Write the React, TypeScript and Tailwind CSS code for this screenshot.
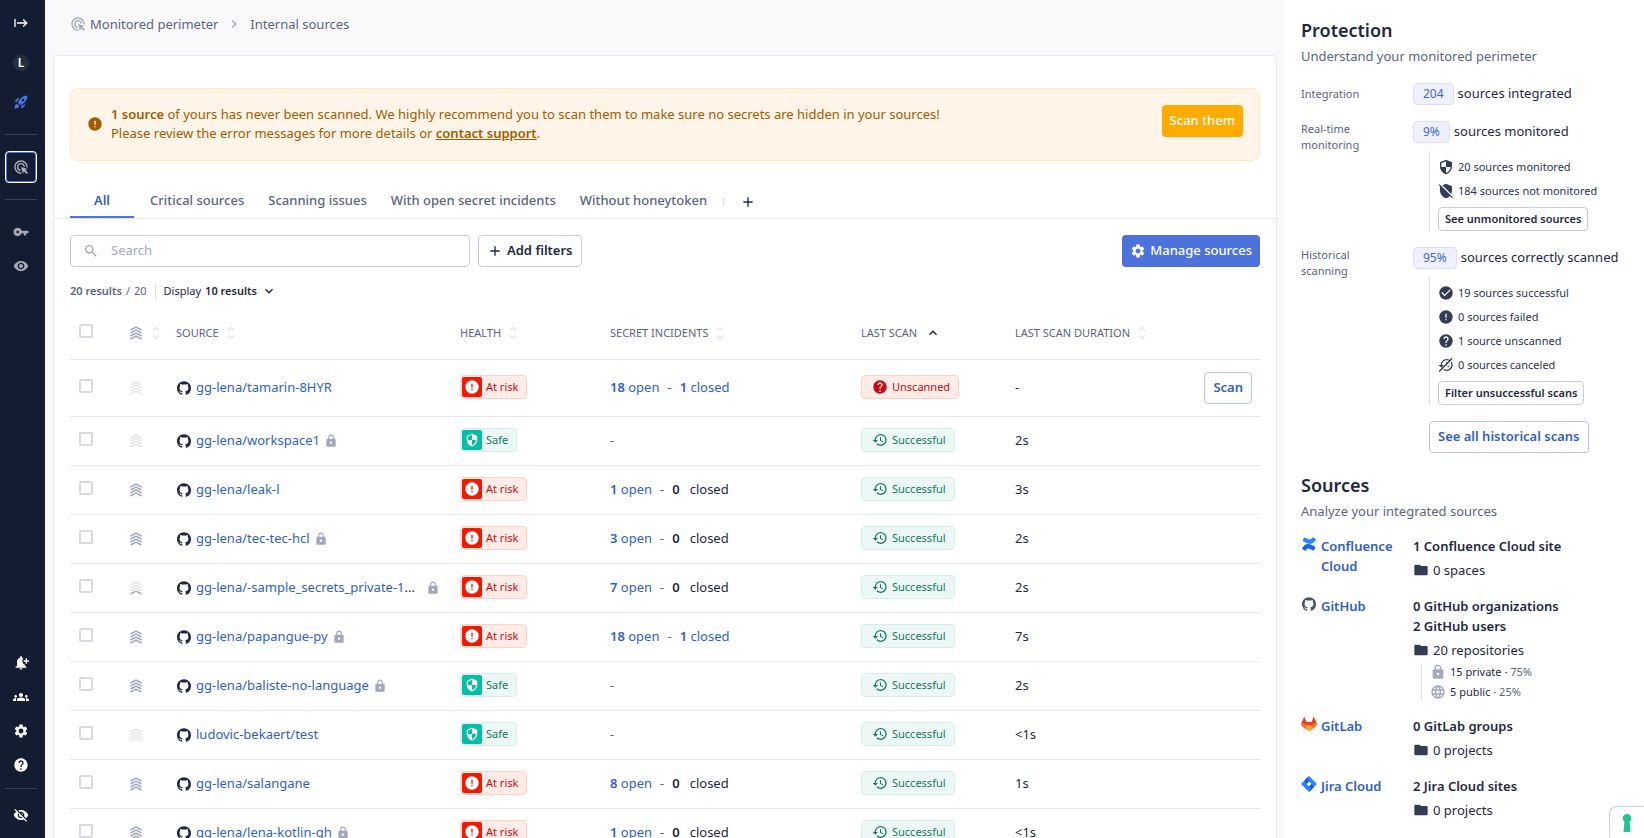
import type { ReactNode } from "react";
import type { IconType } from "react-icons";
import {
  MdAdd,
  MdAdsClick,
  MdCheckCircle,
  MdChevronRight,
  MdError,
  MdExpandLess,
  MdExpandMore,
  MdFolder,
  MdGroups,
  MdHelp,
  MdHistory,
  MdLanguage,
  MdLock,
  MdNotificationAdd,
  MdRemoveModerator,
  MdRocketLaunch,
  MdSearch,
  MdSecurity,
  MdSettings,
  MdStart,
  MdVisibility,
  MdVisibilityOff,
} from "react-icons/md";
import { SiGithub } from "react-icons/si";

type Level = "none" | "low" | "all";

interface Source {
  name: string;
  shortened?: boolean;
  locked?: boolean;
  level: Level;
  open?: number;
  closed?: number;
  scanned: boolean;
  duration: string;
}

const sources: Source[] = [
  { name: "gg-lena/tamarin-8HYR", level: "none", open: 18, closed: 1, scanned: false, duration: "-" },
  { name: "gg-lena/workspace1", locked: true, level: "none", scanned: true, duration: "2s" },
  { name: "gg-lena/leak-l", level: "all", open: 1, closed: 0, scanned: true, duration: "3s" },
  { name: "gg-lena/tec-tec-hcl", locked: true, level: "all", open: 3, closed: 0, scanned: true, duration: "2s" },
  { name: "gg-lena/-sample_secrets_private-1", shortened: true, locked: true, level: "low", open: 7, closed: 0, scanned: true, duration: "2s" },
  { name: "gg-lena/papangue-py", locked: true, level: "all", open: 18, closed: 1, scanned: true, duration: "7s" },
  { name: "gg-lena/baliste-no-language", locked: true, level: "all", scanned: true, duration: "2s" },
  { name: "ludovic-bekaert/test", level: "none", scanned: true, duration: "<1s" },
  { name: "gg-lena/salangane", level: "all", open: 8, closed: 0, scanned: true, duration: "1s" },
  { name: "gg-lena/lena-kotlin-gh", locked: true, level: "all", open: 1, closed: 0, scanned: true, duration: "<1s" },
];

function Criticality({ level }: { level: Level }) {
  const rest = level === "all" ? "#a3a8ba" : "#e3e4ea";
  const last = level === "none" ? "#e3e4ea" : "#a3a8ba";
  return (
    <svg viewBox="0 0 12 14" className="h-3.5 w-3" fill="none" strokeWidth="1.5" aria-hidden="true">
      <path d="M.5 4 6 1l5.5 3M.5 7 6 4l5.500 3M.5 10 6 7l5.500 3" stroke={rest} />
      <path d="M.5 13 6 10l5.500 3" stroke={last} />
    </svg>
  );
}

function SortIcon() {
  return (
    <svg viewBox="0 0 8 14" className="h-3.5 w-2" fill="none" stroke="#e3e4ea" strokeWidth="1.4" aria-hidden="true">
      <path d="M1 4.500 4 1.500l3 3M1 9.500l3 3 3-3" />
    </svg>
  );
}

function KeyIcon({ className }: { className?: string }) {
  return (
    <svg viewBox="0 0 24 24" className={className} fill="currentColor" aria-hidden="true">
      <path
        fillRule="evenodd"
        d="M7 5.800a6.200 6.200 0 1 0 5.900 8.200H16v2.200a1.200 1.200 0 0 0 1.200 1.200h1.600a1.200 1.200 0 0 0 1.200-1.200V14h2a1.500 1.500 0 0 0 1.500-1.500v-1A1.500 1.500 0 0 0 22 10h-9.100A6.200 6.200 0 0 0 7 5.800zM7 10a2 2 0 1 1 0 4 2 2 0 0 1 0-4z"
      />
    </svg>
  );
}

function Checkbox({ label }: { label: string }) {
  return (
    <input
      type="checkbox"
      aria-label={label}
      className="mb-1 block size-3.5 appearance-none rounded-xs border-2 border-[#d8d9e1] bg-white checked:bg-[#4d72db]"
    />
  );
}

function RailButton({
  icon: Icon,
  label,
  className,
}: {
  icon: IconType | typeof KeyIcon;
  label: string;
  className: string;
}) {
  return (
    <button type="button" aria-label={label} className={`flex w-8 items-center justify-center ${className}`}>
      <Icon className="size-4" />
    </button>
  );
}

function Rail() {
  return (
    <nav aria-label="Main" className="flex w-[45px] shrink-0 flex-col bg-[#141c31] pr-1 pl-[5px]">
      <RailButton icon={MdStart} label="Expand menu" className="mt-[7px] h-8 text-white" />
      <button type="button" aria-label="Workspace" className="mt-2 flex h-8 w-8 items-center justify-center">
        <span className="flex size-4 items-center justify-center rounded-full bg-[#262e42] text-xs font-semibold text-white">L</span>
      </button>
      <RailButton icon={MdRocketLaunch} label="Get started" className="mt-[7px] h-8 text-[#4d72db]" />
      <hr className="mt-4 w-8 border-[#3a4257]" />
      <RailButton
        icon={MdAdsClick}
        label="Monitored perimeter"
        className="mt-4 h-8 rounded-sm border border-white text-[#b0b3be] inset-ring inset-ring-[#4d72db]"
      />
      <hr className="mt-4 w-8 border-[#3a4257]" />
      <RailButton icon={KeyIcon} label="Secrets" className="mt-4 h-8 text-[#a5a8b4]" />
      <RailButton icon={MdVisibility} label="Public monitoring" className="mt-[2px] h-8 text-[#a5a8b4]" />
      <div className="mt-auto flex flex-col pb-[7px]">
        <RailButton icon={MdNotificationAdd} label="Notifications" className="h-[34px] text-white" />
        <RailButton icon={MdGroups} label="Members" className="h-[34px] text-white" />
        <RailButton icon={MdSettings} label="Settings" className="h-[34px] text-white" />
        <RailButton icon={MdHelp} label="Help" className="h-[34px] text-white" />
        <hr className="mt-1.5 mb-2.5 w-8 border-[#3a4257]" />
        <RailButton icon={MdVisibilityOff} label="Hide sensitive data" className="h-8 text-white" />
      </div>
    </nav>
  );
}

const tabs = ["All", "Critical sources", "Scanning issues", "With open secret incidents", "Without honeytoken"];

function Tabs() {
  return (
    <div className="mt-[25px] flex items-center border-b border-[#e6e7eb] px-4">
      <div role="tablist" className="flex">
        {tabs.map((tab, i) => (
          <button
            key={tab}
            type="button"
            role="tab"
            aria-selected={i === 0}
            className={
              i === 0
                ? "mr-1 h-8 w-16 border-b-2 border-[#4d72db] font-semibold text-[#2f5fc4]"
                : "h-8 border-b-2 border-transparent px-3 font-medium text-[#5c6480]"
            }
          >
            {tab}
          </button>
        ))}
      </div>
      <span className="ml-1 h-2 w-px bg-[#d8d9e1]" />
      <button type="button" aria-label="Add tab" className="ml-4 flex size-4 items-center justify-center text-[#1f2840]">
        <MdAdd className="size-4" />
      </button>
    </div>
  );
}

function Health({ safe }: { safe: boolean }) {
  return safe ? (
    <span className="inline-flex h-6 items-center rounded-sm border border-[#d3f1ea] bg-[#ecf8f6] pr-2 pl-px text-[11px] text-[#14785f]">
      <span className="mr-1 flex size-5 items-center justify-center rounded-xs bg-[#00bfa5] text-white">
        <MdSecurity className="size-3.5" />
      </span>
      Safe
    </span>
  ) : (
    <span className="inline-flex h-6 items-center rounded-sm border border-[#ffd2c6] bg-[#ffece7] pr-2 pl-px text-[11px] text-[#c80a14]">
      <span className="mr-1 flex size-5 items-center justify-center rounded-xs bg-[#f51800] text-white">
        <MdError className="size-4" />
      </span>
      At risk
    </span>
  );
}

function ScanStatus({ scanned }: { scanned: boolean }) {
  return scanned ? (
    <span className="inline-flex h-6 items-center gap-1 rounded-sm border border-[#d3f1ea] bg-[#ecf8f6] pr-2 pl-2.5 text-[11px] text-[#14785f]">
      <MdHistory className="size-4" />
      Successful
    </span>
  ) : (
    <span className="inline-flex h-6 items-center gap-1 rounded-sm border border-[#ffd2c6] bg-[#ffece7] pr-2 pl-2.5 text-[11px] text-[#c80a14]">
      <MdHelp className="size-4" />
      Unscanned
    </span>
  );
}

function Incidents({ open, closed }: { open?: number; closed?: number }) {
  if (open === undefined) return <span className="text-[#5c6480]">-</span>;
  return (
    <span className="flex items-center gap-2">
      <a href="#open" className="text-[#2f5fc4]">
        <b className="font-semibold">{open}</b> open
      </a>
      <span className="text-[#5c6480]">-</span>
      {closed ? (
        <a href="#closed" className="text-[#2f5fc4]">
          <b className="font-semibold">{closed}</b> closed
        </a>
      ) : (
        <span className="flex gap-2.5">
          <b className="font-semibold">0</b> closed
        </span>
      )}
    </span>
  );
}

function Heading({ children, sorted }: { children: string; sorted?: boolean }) {
  return (
    <th scope="col" className="p-0 text-left font-normal">
      <button type="button" className="flex items-center gap-2 text-[11px] text-[#5c6480] uppercase">
        {children}
        {sorted ? <MdExpandLess className="size-4 text-[#1f2840]" /> : <SortIcon />}
      </button>
    </th>
  );
}

function SourcesTable() {
  return (
    <table className="mt-2 w-full table-fixed">
      <colgroup>
        <col className="w-[60px]" />
        <col className="w-[46px]" />
        <col className="w-[284px]" />
        <col className="w-[150px]" />
        <col className="w-[251px]" />
        <col className="w-[154px]" />
        <col />
        <col className="w-[80px]" />
      </colgroup>
      <thead>
        <tr className="h-[52px] border-b border-[#e6e7eb]">
          <th className="p-0 pl-[9px]">
            <Checkbox label="Select all sources" />
          </th>
          <th className="p-0">
            <button type="button" aria-label="Sort by criticality" className="flex items-center gap-2.5">
              <Criticality level="all" />
              <SortIcon />
            </button>
          </th>
          <Heading>Source</Heading>
          <Heading>Health</Heading>
          <Heading>Secret incidents</Heading>
          <Heading sorted>Last scan</Heading>
          <Heading>Last scan duration</Heading>
          <th aria-label="Actions" />
        </tr>
      </thead>
      <tbody>
        {sources.map((s) => (
          <tr key={s.name} className={s.scanned ? "h-[49px] border-b border-[#e6e7eb]" : "h-[57px] border-b border-[#e6e7eb]"}>
            <td className="p-0 pl-[9px]">
              <Checkbox label={`Select ${s.name}`} />
            </td>
            <td className="p-0">
              <Criticality level={s.level} />
            </td>
            <td className="p-0 pr-5">
              <span className="flex items-center">
                <SiGithub className="ml-px size-3.5 shrink-0" />
                <a href="#source" className="ml-[5px] whitespace-nowrap text-[#2f5fc4]">
                  {s.name}
                </a>
                {s.shortened && <span className="mr-auto">...</span>}
                {s.locked && <MdLock className="ml-1 size-3.5 shrink-0 text-[#a3a8ba]" />}
              </span>
            </td>
            <td className="p-0">
              <Health safe={s.open === undefined} />
            </td>
            <td className="p-0">
              <Incidents open={s.open} closed={s.closed} />
            </td>
            <td className="p-0">
              <ScanStatus scanned={s.scanned} />
            </td>
            <td className="p-0">{s.duration}</td>
            <td className="p-0 pr-2 text-right">
              {!s.scanned && (
                <button type="button" className="h-8 rounded-sm border border-[#b9c2f3] px-2 font-semibold text-[#2f5fc4]">
                  Scan
                </button>
              )}
            </td>
          </tr>
        ))}
      </tbody>
    </table>
  );
}

function MainCard() {
  return (
    <section className="mx-2 rounded-t-sm border border-[#e6e7eb] bg-white pt-8">
      <div className="mx-4 flex items-start gap-2 rounded-lg border border-[#ffe8c6] bg-[#fff4e8] px-4 pt-4 pb-[17px] text-[#a15c00]">
        <MdError className="size-4 shrink-0 self-center" />
        <p className="grow leading-[19px]">
          <b className="font-semibold">1 source</b> of yours has never been scanned. We highly recommend you to scan them to make sure no secrets are
          hidden in your sources!
          <br />
          Please review the error messages for more details or{" "}
          <a href="#support" className="font-semibold underline">
            contact support
          </a>
          .
        </p>
        <button type="button" className="h-8 shrink-0 rounded-sm bg-[#ffab00] px-2 font-medium text-white">
          Scan them
        </button>
      </div>
      <Tabs />
      <div className="px-4 pt-4">
        <div className="flex gap-2">
          <label className="flex h-8 w-[400px] items-center rounded-sm border border-[#c9cbd6] pl-3">
            <MdSearch className="size-4 text-[#a3a8ba]" />
            <input type="search" aria-label="Search" placeholder="Search" className="ml-3 grow outline-none placeholder:text-[#a3a8ba]" />
          </label>
          <button type="button" className="flex h-8 items-center gap-1 rounded-sm border border-[#c9cbd6] px-2 font-semibold">
            <MdAdd className="size-4" />
            Add filters
          </button>
          <button type="button" className="ml-auto flex h-8 items-center gap-1 rounded-sm bg-[#4d72db] px-2 font-medium text-white">
            <MdSettings className="size-4" />
            Manage sources
          </button>
        </div>
        <div className="mt-4 flex h-4 items-center text-[11px]">
          <span className="flex gap-1 text-[#5c6480]">
            <b className="font-semibold">20 results</b>
            <span>/</span>
            <span>20</span>
          </span>
          <span className="mx-2 h-4 w-px bg-[#e0e1e8]" />
          <button type="button" className="flex items-center gap-1">
            Display <b className="font-semibold">10 results</b>
            <MdExpandMore className="size-4" />
          </button>
        </div>
        <SourcesTable />
      </div>
    </section>
  );
}

function Metric({ label, value, text, children }: { label: string; value: string; text: string; children?: ReactNode }) {
  return (
    <div className={children ? "mb-4 flex items-start" : "mb-4 flex items-center"}>
      <div className="w-28 shrink-0 pr-8 text-[11px] leading-4 text-[#5c6480]">{label}</div>
      <div className="grow">
        <div className="flex items-center gap-1 whitespace-nowrap">
          <span className="flex h-[22px] items-center rounded-sm border border-[#dcdcf8] bg-[#f0f0fd] px-[9px] text-xs text-[#3f68cf]">{value}</span>
          {text}
        </div>
        {children && <div className="mt-2 ml-4 border-l border-[#e0e1e8] pl-2">{children}</div>}
      </div>
    </div>
  );
}

function Detail({ icon, children }: { icon: ReactNode; children: string }) {
  return (
    <li className="flex h-6 items-center gap-1 text-[11px] text-[#2b3450]">
      {icon}
      {children}
    </li>
  );
}

function SmallButton({ children }: { children: string }) {
  return (
    <button type="button" className="mt-1 block h-6 rounded-sm border border-[#c9cbd6] px-1.5 text-[11px] font-semibold">
      {children}
    </button>
  );
}

const solid = "size-4 text-[#333c55]";

function CanceledIcon() {
  return (
    <span className="relative flex size-4 items-center justify-center text-[#333c55]">
      <MdHistory className="size-4" />
      <svg viewBox="0 0 16 16" className="absolute inset-0 size-4" aria-hidden="true">
        <path d="M2.200 15.200 15 2.400" stroke="#fff" strokeWidth="1.200" />
        <path d="M1.200 14.400 14 1.600" stroke="#333c55" strokeWidth="1.400" />
      </svg>
    </span>
  );
}

function ConfluenceLogo() {
  return (
    <svg viewBox="0 0 24 24" className="size-3.5" aria-label="Confluence">
      <path
        fill="#1868db"
        d="M.87 18.257c-.248.382-.53.875-.763 1.245a.764.764 0 0 0 .255 1.04l4.965 3.054a.764.764 0 0 0 1.058-.26c.199-.332.454-.763.733-1.221 1.967-3.247 3.945-2.853 7.508-1.146l4.957 2.337a.764.764 0 0 0 1.028-.382l2.364-5.346a.764.764 0 0 0-.382-1 599.851 599.851 0 0 1-4.965-2.361C10.911 10.97 5.224 11.185.87 18.257z"
      />
      <path
        fill="#2684ff"
        d="M23.131 5.743c.249-.405.531-.875.764-1.25a.764.764 0 0 0-.256-1.034L18.675.404a.764.764 0 0 0-1.058.26c-.195.335-.451.763-.734 1.225-1.966 3.246-3.945 2.85-7.508 1.146L4.437.694a.764.764 0 0 0-1.027.382L1.046 6.422a.764.764 0 0 0 .382 1c1.039.49 3.105 1.467 4.965 2.361 6.698 3.246 12.392 3.029 16.738-4.04z"
      />
    </svg>
  );
}

function GitlabLogo() {
  return (
    <svg viewBox="0 0 24 22" className="h-3.5 w-4" aria-label="GitLab">
      <path fill="#e24329" d="M23.6 8.6 20.2.6a.8.8 0 0 0-1.5 0l-2.4 6.7H7.7L5.3.6a.8.8 0 0 0-1.5 0L.4 8.6C-.4 12 .6 14 3 16l9-3 9 3c2.4-2 3.4-4 2.6-7.4z" />
      <path fill="#fc6d26" d="M.4 8.6C-.4 12 .6 14 3 16l6 4.5 3-2.2 3 2.2 6-4.5c2.4-2 3.4-4 2.6-7.4-2 .2-3.7 1-5 2L12 15.5 5.400 10.600c-1.300-1-3-1.800-5-2z" />
      <path fill="#fca326" d="m8 13 4 3 4-3 1.500 5.600L13.100 21.600a2 2 0 0 1-2.200 0L6.500 18.600z" />
    </svg>
  );
}

function JiraLogo() {
  return (
    <svg viewBox="0 0 24 24" className="size-4" aria-label="Jira">
      <path fill="#2684ff" fillRule="evenodd" d="M12 0 24 12 12 24 0 12zm0 8.200L8.200 12l3.800 3.800 3.800-3.800z" />
      <path fill="#0f5fd6" d="M12 0c-2.500 2.600-2.400 5.800 0 8.200L8.200 12 4.700 7.300z" />
      <path fill="#0f5fd6" d="M12 24c2.500-2.600 2.400-5.800 0-8.200l3.800-3.800 3.500 4.700z" />
    </svg>
  );
}

function Integration({ logo, name, titles, count, children }: { logo: ReactNode; name: string; titles: string[]; count: string; children?: ReactNode }) {
  return (
    <div className="mb-4 flex leading-5">
      <div className="flex w-28 shrink-0 items-start pr-2">
        <span className="flex h-4 w-4 shrink-0 items-center justify-center">{logo}</span>
        <a href="#integration" className="ml-1 font-semibold text-[#2f5fc4]">
          {name}
        </a>
      </div>
      <div className="grow">
        {titles.map((t) => (
          <div key={t} className="font-semibold">
            {t}
          </div>
        ))}
        <div className="mt-1 flex items-center gap-1">
          <MdFolder className="size-4 text-[#333c55]" />
          {count}
        </div>
        {children}
      </div>
    </div>
  );
}

function Panel() {
  return (
    <aside className="w-[359px] shrink-0 overflow-y-auto bg-white px-4 pt-4 [scrollbar-width:none]">
      <h2 className="text-lg leading-7 font-semibold">Protection</h2>
      <p className="mt-0.5 mb-[17px] leading-5 text-[#5c6480]">Understand your monitored perimeter</p>
      <Metric label="Integration" value="204" text="sources integrated" />
      <Metric label="Real-time monitoring" value="9%" text="sources monitored">
        <ul className="pt-1">
          <Detail icon={<MdSecurity className={solid} />}>20 sources monitored</Detail>
          <Detail icon={<MdRemoveModerator className={solid} />}>184 sources not monitored</Detail>
        </ul>
        <SmallButton>See unmonitored sources</SmallButton>
      </Metric>
      <Metric label="Historical scanning" value="95%" text="sources correctly scanned">
        <ul className="pt-1">
          <Detail icon={<MdCheckCircle className={solid} />}>19 sources successful</Detail>
          <Detail icon={<MdError className={solid} />}>0 sources failed</Detail>
          <Detail icon={<MdHelp className={solid} />}>1 source unscanned</Detail>
          <Detail icon={<CanceledIcon />}>0 sources canceled</Detail>
        </ul>
        <SmallButton>Filter unsuccessful scans</SmallButton>
      </Metric>
      <button type="button" className="ml-32 h-8 rounded-sm border border-[#b9c2f3] px-2 font-semibold text-[#2f5fc4]">
        See all historical scans
      </button>

      <h2 className="mt-[18px] text-lg leading-7 font-semibold">Sources</h2>
      <p className="mt-0.5 mb-[15px] leading-5 text-[#5c6480]">Analyze your integrated sources</p>
      <Integration logo={<ConfluenceLogo />} name="Confluence Cloud" titles={["1 Confluence Cloud site"]} count="0 spaces" />
      <Integration
        logo={<SiGithub className="size-3.5 text-[#4a5268]" />}
        name="GitHub"
        titles={["0 GitHub organizations", "2 GitHub users"]}
        count="20 repositories"
      >
        <ul className="mt-1 ml-2 space-y-1 border-l border-[#e0e1e8] pl-2 text-[11px]">
          <li className="flex h-4 items-center gap-1">
            <MdLock className="size-4 text-[#a3a8ba]" />
            <span>
              15 private · <span className="text-[#5c6480]">75%</span>
            </span>
          </li>
          <li className="flex h-4 items-center gap-1">
            <MdLanguage className="size-4 text-[#a3a8ba]" />
            <span>
              5 public · <span className="text-[#5c6480]">25%</span>
            </span>
          </li>
        </ul>
      </Integration>
      <Integration logo={<GitlabLogo />} name="GitLab" titles={["0 GitLab groups"]} count="0 projects" />
      <Integration logo={<JiraLogo />} name="Jira Cloud" titles={["2 Jira Cloud sites"]} count="0 projects" />
    </aside>
  );
}

export default function App() {
  return (
    <div className="flex h-screen overflow-hidden bg-[#f9f9fb] font-['Noto_Sans',sans-serif] text-[13px] text-[#1f2840]">
      <Rail />
      <main className="min-w-0 grow overflow-y-auto [scrollbar-width:none]">
        <nav aria-label="Breadcrumb" className="flex h-[55px] items-start pt-[14px] pl-[25px] leading-5 text-[#5c6480]">
          <a href="#perimeter" className="flex items-center gap-1">
            <MdAdsClick className="size-4 text-[#a3a8ba]" />
            Monitored perimeter
          </a>
          <MdChevronRight className="mx-2 mt-0.5 size-4 text-[#a3a8ba]" />
          <span>Internal sources</span>
        </nav>
        <MainCard />
      </main>
      <Panel />
      <button
        type="button"
        aria-label="Open help widget"
        className="absolute right-0 bottom-0 flex h-8 w-[35px] items-end justify-center rounded-tl-lg border-t border-l border-[#d0d1d8] bg-white pb-1.5"
      >
        <svg viewBox="0 0 10 18" className="h-[18px] w-2.5" fill="#1ec592" aria-hidden="true">
          <path d="M5 0a4.300 4.300 0 0 1 2.600 7.700L8.500 18h-7l.9-10.300A4.300 4.300 0 0 1 5 0z" />
        </svg>
      </button>
    </div>
  );
}
